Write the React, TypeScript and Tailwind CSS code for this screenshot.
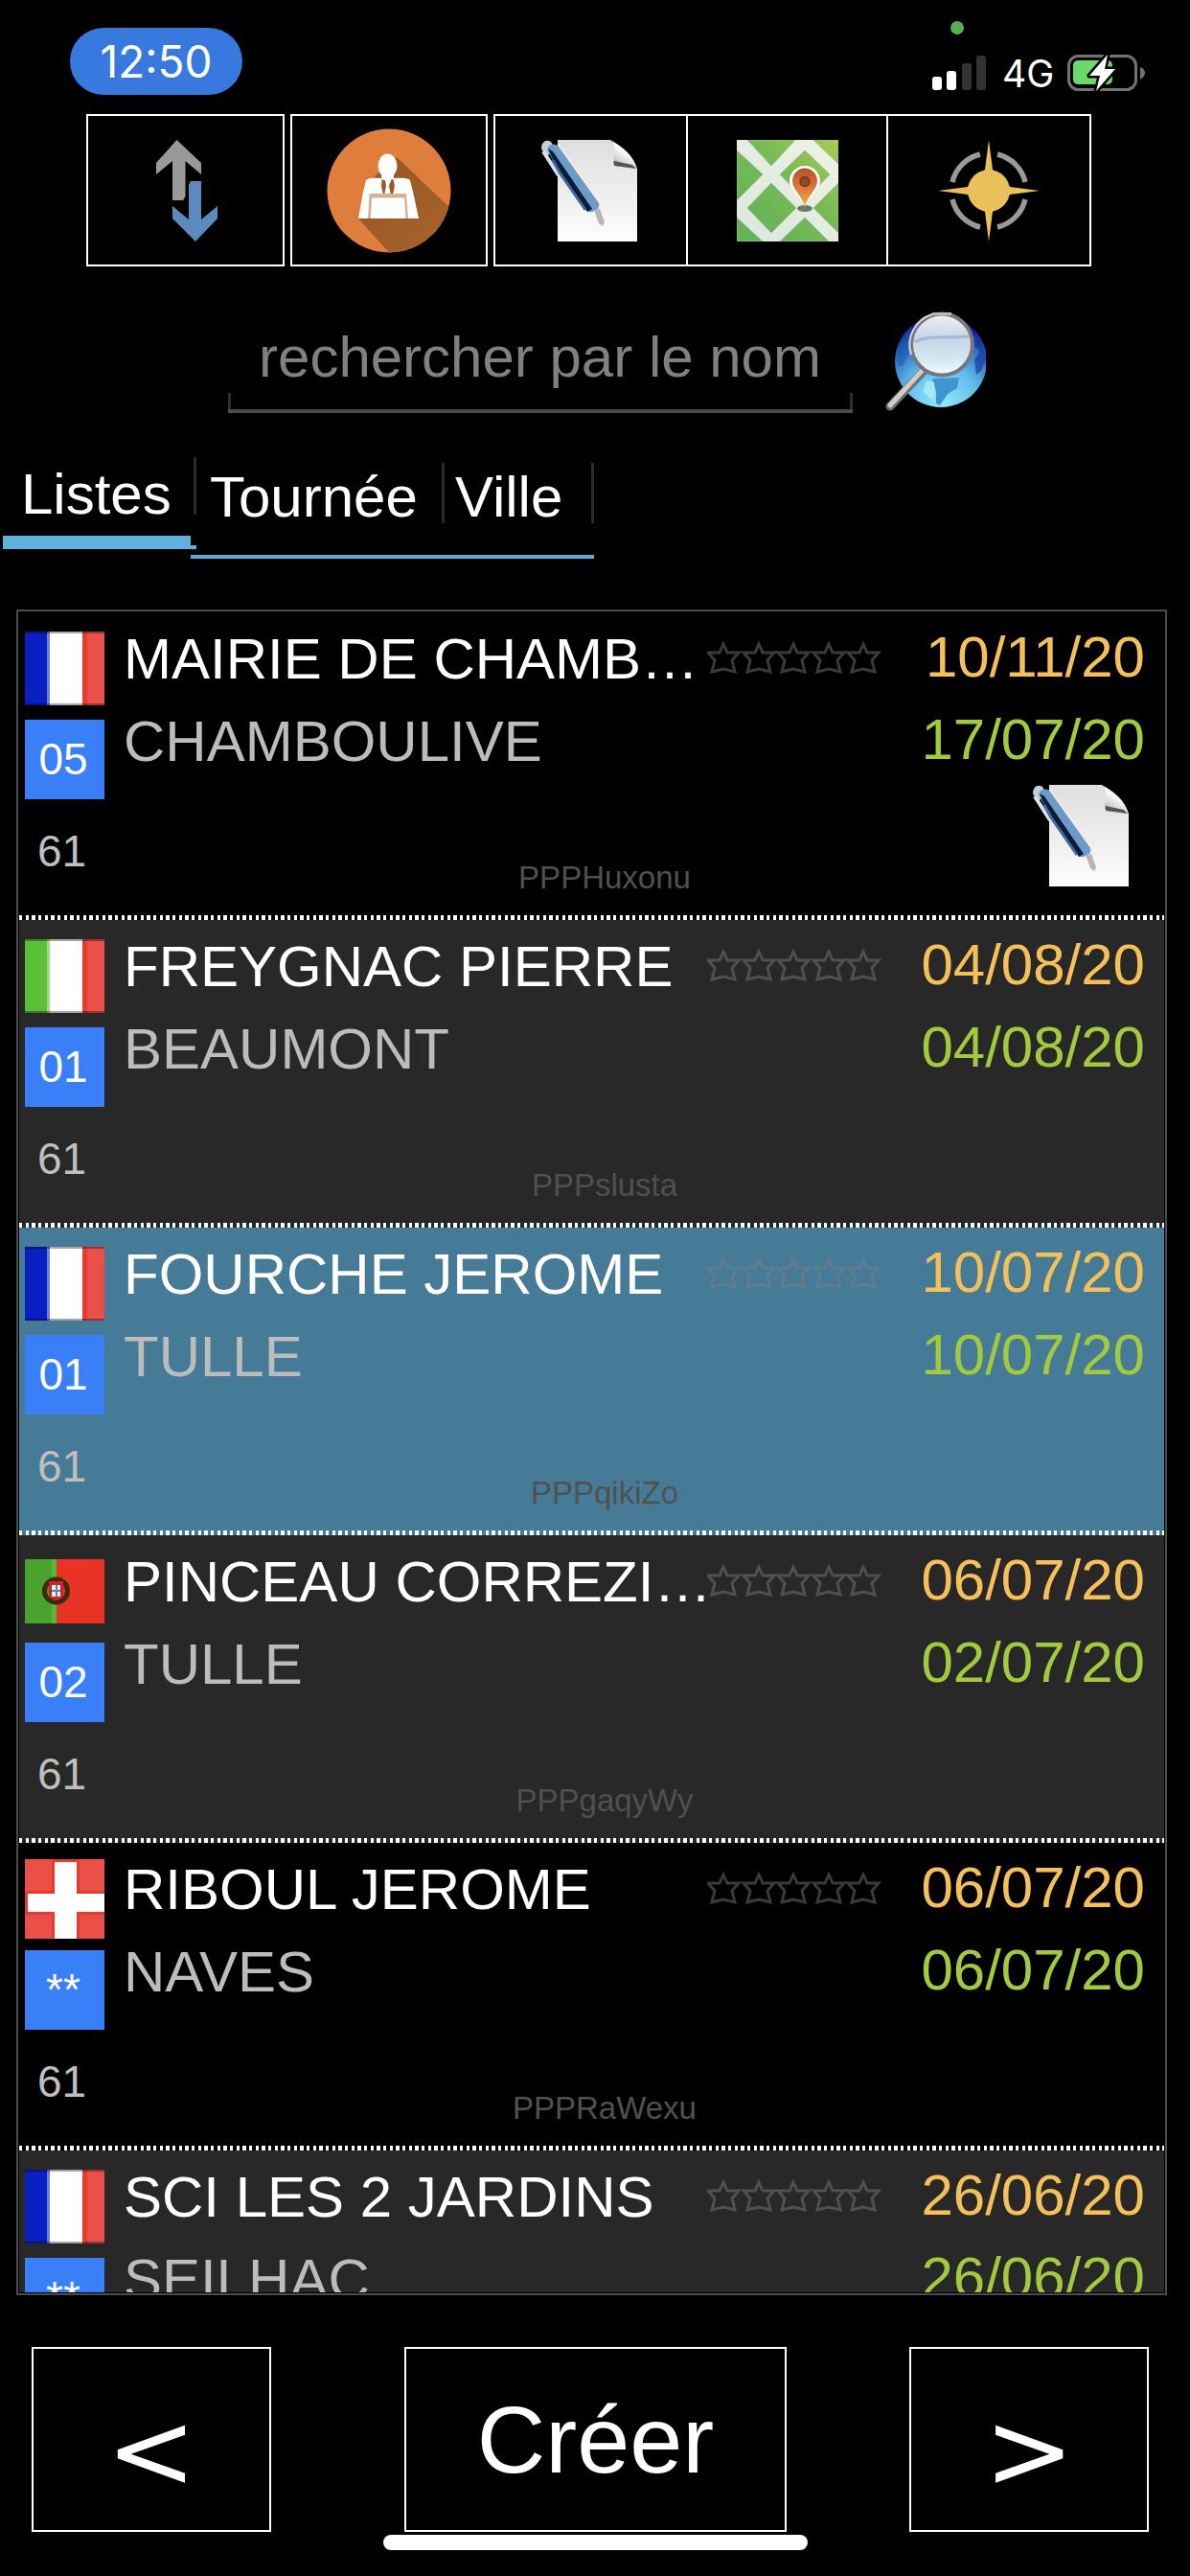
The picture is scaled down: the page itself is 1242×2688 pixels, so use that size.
import React from "react";

type Country = "fr" | "it" | "pt" | "ch";

interface Client {
  country: Country;
  code: string;
  name: string;
  city: string;
  planned: string;
  visited: string;
  reference: string;
  memo?: boolean;
  background: string;
}

const clients: Client[] = [
  { country: "fr", code: "05", name: "MAIRIE DE CHAMB…", city: "CHAMBOULIVE", planned: "10/11/20", visited: "17/07/20", reference: "PPPHuxonu", memo: true, background: "bg-black" },
  { country: "it", code: "01", name: "FREYGNAC PIERRE", city: "BEAUMONT", planned: "04/08/20", visited: "04/08/20", reference: "PPPslusta", background: "bg-[#282828]" },
  { country: "fr", code: "01", name: "FOURCHE JEROME", city: "TULLE", planned: "10/07/20", visited: "10/07/20", reference: "PPPqikiZo", background: "bg-[#467b97]" },
  { country: "pt", code: "02", name: "PINCEAU CORREZI…", city: "TULLE", planned: "06/07/20", visited: "02/07/20", reference: "PPPgaqyWy", background: "bg-[#282828]" },
  { country: "ch", code: "**", name: "RIBOUL JEROME", city: "NAVES", planned: "06/07/20", visited: "06/07/20", reference: "PPPRaWexu", background: "bg-black" },
  { country: "fr", code: "**", name: "SCI LES 2 JARDINS", city: "SEILHAC", planned: "26/06/20", visited: "26/06/20", reference: "", background: "bg-[#282828]" },
];

function SortIcon() {
  return (
    <svg viewBox="0 0 106 106" className="size-[106px]" aria-hidden="true">
      <path fill="#999" d="M43.500 0 69 24V36L52.500 22V59L50 63H39V22L22 36V24Z" />
      <path fill="#5b8abd" d="M58 43H69V83L86 69V82L63 106 39 82V69L56 83V47Z" />
    </svg>
  );
}

function AgentIcon() {
  return (
    <svg viewBox="0 0 130 130" className="size-[130px]" aria-hidden="true">
      <defs>
        <clipPath id="agent-disc"><circle cx="65" cy="65" r="64.500" /></clipPath>
        <linearGradient id="agent-shade" x1="0" y1="0" x2="1" y2="1">
          <stop offset="0.300" stopColor="#9b5a25" />
          <stop offset="1" stopColor="#a9652d" />
        </linearGradient>
      </defs>
      <circle cx="65" cy="65" r="64.500" fill="#df7d3c" />
      <path d="M73 30 135 89V135H70L33 94 50 50Z" fill="url(#agent-shade)" clipPath="url(#agent-disc)" />
      <ellipse cx="63.500" cy="39" rx="10" ry="12.500" fill="#fff" />
      <path d="M57 46H70V52C76 52 83 51 87 54L90 66 96 94H33L38 66 41 54C45 51 52 52 57 52Z" fill="#fff" />
      <path d="M57.500 53 63 55 69.500 53 71 60 69 69H59L57 60Z" fill="#9b5a25" />
      <path d="M61 54H67L65 60 67 70H60L62 60Z" fill="#fff" />
      <path d="M43 94 44.500 68H83L85 94" fill="#d6b295" />
      <path d="M46 94 47 72.500H81L82.500 94Z" fill="#fff" />
    </svg>
  );
}

function MemoIcon({ id }: { id: string }) {
  return (
    <svg viewBox="0 0 106 106" className="size-[106px]" aria-hidden="true">
      <defs>
        <linearGradient id={`${id}-page`} x1="0" y1="0" x2="0" y2="1">
          <stop offset="0" stopColor="#dedede" />
          <stop offset="1" stopColor="#fdfdfd" />
        </linearGradient>
        <linearGradient id={`${id}-fold`} x1="0.200" y1="1" x2="0.800" y2="0">
          <stop offset="0" stopColor="#555" />
          <stop offset="0.250" stopColor="#d0d0d0" />
          <stop offset="0.600" stopColor="#fff" />
          <stop offset="1" stopColor="#999" />
        </linearGradient>
      </defs>
      <path d="M18 0H73L101 30V106H18Z" fill={`url(#${id}-page)`} />
      <path d="M73 0C80 6 77 14 76 25 84 26 94 24 101 30 97 16 86 7 73 0Z" fill={`url(#${id}-fold)`} />
      <path d="M77 22 96 26 100 30 77 27Z" fill="#555" />
      <path d="M17 6 66 74" stroke="#f8efe6" strokeWidth="5" />
      <path d="M1 9C1 2 6-1 11 2L15 9 6 18Z" fill="#c9cdd0" />
      <path d="M3 12 19 37" stroke="#d9e2ea" strokeWidth="4" />
      <path d="M7 10C9 4 15 3 19 7L61 66C63 71 57 76 50 75L19 33Z" fill="#6d9bc8" />
      <path d="M8 9 13 12 54 72 49 75 18 32Z" fill="#0b1c3a" />
      <path d="M13 21 20 34 47 73" stroke="#3f6c9c" strokeWidth="3" fill="none" />
      <path d="M56 73 62 72 67 86 65 90 61 87Z" fill="#b5b5b5" />
    </svg>
  );
}

function MapIcon() {
  return (
    <svg viewBox="0 0 106 106" className="size-[106px]" aria-hidden="true">
      <defs>
        <linearGradient id="map-land" gradientUnits="userSpaceOnUse" x1="20" y1="90" x2="106" y2="0">
          <stop offset="0" stopColor="#66b356" />
          <stop offset="0.500" stopColor="#78ba56" />
          <stop offset="1" stopColor="#a9cc52" />
        </linearGradient>
        <linearGradient id="map-road" x1="0" y1="1" x2="1" y2="0">
          <stop offset="0" stopColor="#d9e7dd" />
          <stop offset="1" stopColor="#eef3e2" />
        </linearGradient>
        <linearGradient id="map-pin" x1="0" y1="0" x2="0" y2="1">
          <stop offset="0" stopColor="#b5522c" />
          <stop offset="0.400" stopColor="#dc6a39" />
          <stop offset="1" stopColor="#f0b03f" />
        </linearGradient>
      </defs>
      <path d="M0 0H106V106H0Z" fill="url(#map-road)" />
      <path
        fill="url(#map-land)"
        stroke="#9fb99a"
        strokeWidth="1"
        d="M11 0H61L36 27ZM80 0H106V25ZM0 11 27 36 0 63ZM71 11 97 36 71 63 45 36ZM36 45 62 71 36 97 11 71ZM106 45V97L80 71ZM0 81 27 106H0ZM71 81 96 106H45Z"
      />
      <ellipse cx="71" cy="71.500" rx="8" ry="3.500" fill="#6d7a6b" />
      <path d="M71 70C68 59 55 53 55 43A16 16 0 0 1 87 43C87 53 74 59 71 70Z" fill="#fff" />
      <path d="M71 70C69 59 58 52 58 43A13 13.500 0 0 1 84 43C84 52 73 59 71 70Z" fill="url(#map-pin)" />
      <circle cx="71" cy="43.500" r="5" fill="#8e4a2b" stroke="#6f3a22" strokeWidth="1.500" />
    </svg>
  );
}

function CompassIcon() {
  return (
    <svg viewBox="0 0 106 106" className="size-[106px]" aria-hidden="true">
      <path
        fill="none"
        stroke="#999"
        strokeWidth="5.500"
        d="M62 15A39 39 0 0 1 91 44M91 62A39 39 0 0 1 62 91M44 91A39 39 0 0 1 15 62M15 44A39 39 0 0 1 44 15"
      />
      <circle cx="53" cy="53" r="22" fill="#eac05b" />
      <path fill="#eac05b" d="M53 0 57 31 75 49 106 53 75 57 57 75 53 106 49 75 31 57 0 53 31 49 49 31Z" />
    </svg>
  );
}

function GlobeSearchIcon() {
  return (
    <svg viewBox="0 0 106 106" className="size-[106px]" aria-hidden="true">
      <defs>
        <radialGradient id="globe-sea" cx="0.500" cy="0.950" r="0.900">
          <stop offset="0" stopColor="#95eafc" />
          <stop offset="0.450" stopColor="#62bdea" />
          <stop offset="0.780" stopColor="#2a68bc" />
          <stop offset="1" stopColor="#04108c" />
        </radialGradient>
        <linearGradient id="globe-lens" x1="0" y1="0" x2="0" y2="1">
          <stop offset="0" stopColor="#f0f0f2" />
          <stop offset="0.400" stopColor="#c8d5e8" />
          <stop offset="0.700" stopColor="#cfe6ee" />
          <stop offset="1" stopColor="#f2fcff" />
        </linearGradient>
      </defs>
      <circle cx="59" cy="52" r="48" fill="url(#globe-sea)" />
      <path d="M90 22C100 28 106 40 106 50L101 62 96 66 94 50 100 42 92 34Z" fill="#12309f" opacity="0.600" />
      <path d="M13 42 22 22 29 16 27 40 20 56 14 58Z" fill="#1b55ad" opacity="0.500" />
      <path d="M50 70 78 69 76 80 66 86 58 98 54 96 54 84Z" fill="#3f94d2" />
      <path d="M44 72 52 74 53 84 50 92 40 84Z" fill="#b5f0fa" opacity="0.700" />
      <path d="M41 62 6 99" stroke="#6f6f6f" strokeWidth="9" strokeLinecap="round" />
      <path d="M40 61 6 98" stroke="#d0ccc8" strokeWidth="5" strokeLinecap="round" />
      <circle cx="60" cy="34.500" r="32" fill="url(#globe-lens)" stroke="#77777b" strokeWidth="4" />
      <path d="M32 32C45 24 70 28 88 26" stroke="#a5b8d4" strokeWidth="3" fill="none" />
      <path d="M28 45A33 33 0 0 1 50 3" stroke="#d8d8d8" strokeWidth="2" fill="none" />
      <path d="M50 1H70V4H50Z" fill="#b9b9b9" />
    </svg>
  );
}

function Flag({ country }: { country: Country }) {
  if (country === "pt") {
    return (
      <svg viewBox="0 0 83 67" className="h-[67px] w-[83px]" role="img" aria-label="Portugal">
        <path d="M0 0H33V67H0Z" fill="#4aa22f" />
        <path d="M28 0H33V67H28Z" fill="#56b838" />
        <path d="M33 0H83V67H33Z" fill="#e93425" />
        <circle cx="32.500" cy="33" r="12" fill="none" stroke="#3d2a0c" strokeWidth="5" />
        <path d="M25 23H40V36C40 45 25 45 25 36Z" fill="#d3202f" />
        <path d="M28 27H37V39H28Z" fill="#e8f2f5" />
        <path d="M32 27H34V39H32ZM28 32H37V34H28Z" fill="#5a8a9a" />
      </svg>
    );
  }
  if (country === "ch") {
    return (
      <svg viewBox="0 0 83 83" className="size-[83px]" role="img" aria-label="Suisse">
        <path d="M0 0H83V83H0Z" fill="#eb5048" />
        <path d="M28 0H57V83H28ZM0 33H83V58H0Z" fill="#ea3a2f" />
        <path d="M31 3H54V36H83V55H54V83H31V55H3V36H31Z" fill="#fff" />
      </svg>
    );
  }
  const french = country === "fr";
  return (
    <svg viewBox="0 0 83 77" className="h-[77px] w-[83px]" role="img" aria-label={french ? "France" : "Italie"}>
      <path d="M0 0H25V77H0Z" fill={french ? "#0a1fc0" : "#5cbf38"} />
      <path d="M25 0H60V77H25Z" fill="#fff" />
      <path d="M23 0H26V77H23Z" fill={french ? "#6f7be0" : "#9bdc85"} />
      <path d="M60 0H83V77H60Z" fill="#eb5048" />
      <path d="M60 0H65V77H60Z" fill="#ea3a2f" />
      <path d="M0 0H83V2H0ZM0 75H83V77H0Z" fill="#000" opacity="0.350" />
    </svg>
  );
}

function Stars() {
  return (
    <svg viewBox="0 0 183 34" className="h-[34px] w-[183px]" role="img" aria-label="0 étoile sur 5">
      <g fill="none" stroke="#808080" strokeOpacity="0.450" strokeWidth="3">
        {[0, 37, 73, 110, 146].map((x) => (
          <path key={x} transform={`translate(${x} 0)`} d="M17 3 21 12H33L26 20 29 32 17 29 5 32 8 20 1 12H13Z" />
        ))}
      </g>
    </svg>
  );
}

function StatusBar() {
  return (
    <div className="relative flex h-[119px] items-start justify-between pr-[46px] pl-[73px]">
      <div className="mt-[29px] flex h-[70px] w-[180px] items-center justify-center rounded-full bg-[#3879df] font-[Inter] text-[46px] leading-none text-white">
        12:50
      </div>
      <span className="absolute top-[22px] right-[236px] size-[14px] rounded-full bg-[#57ac55]" />
      <div className="mt-[57px] flex h-[38px] items-center">
        <svg viewBox="0 0 57 38" className="mr-[16px] h-[38px] w-[57px]" role="img" aria-label="Réseau">
          <rect x="0" y="23" width="10" height="14" rx="3" fill="#fff" />
          <rect x="15" y="17" width="10" height="20" rx="3" fill="#fff" />
          <rect x="31" y="9" width="10" height="28" rx="3" fill="#333" />
          <rect x="46" y="1" width="10" height="36" rx="3" fill="#333" />
        </svg>
        <span className="w-[68px] font-[Inter] text-[39px] leading-none">4G</span>
        <svg viewBox="0 0 82 40" className="h-[40px] w-[82px]" role="img" aria-label="Batterie en charge">
          <rect x="1.500" y="2.500" width="70" height="35" rx="10" fill="none" stroke="#737373" strokeWidth="3" />
          <path d="M76 14Q81 16 81 20T76 27Z" fill="#737373" />
          <rect x="6" y="7" width="41" height="25" rx="5" fill="#6ad969" />
          <path d="M42 1 23 23H34L30 39 50 16H39Z" fill="#fff" stroke="#000" strokeWidth="5" strokeLinejoin="round" paintOrder="stroke" />
        </svg>
      </div>
    </div>
  );
}

function Toolbar() {
  const button = "flex h-[159px] items-center justify-center border-2 border-white";
  return (
    <nav className="flex pr-[103px] pl-[90px]" aria-label="Outils">
      <button type="button" aria-label="Trier" className={`${button} mr-[6px] flex-[203]`}><SortIcon /></button>
      <button type="button" aria-label="Clients" className={`${button} mr-[6px] flex-[202]`}><AgentIcon /></button>
      <button type="button" aria-label="Mémo" className={`${button} flex-[199]`}><MemoIcon id="tool" /></button>
      <button type="button" aria-label="Carte" className={`${button} flex-[207] border-l-0`}><MapIcon /></button>
      <button type="button" aria-label="Position" className={`${button} flex-[210] border-l-0`}><CompassIcon /></button>
    </nav>
  );
}

function SearchBar() {
  return (
    <form className="mt-[46px] flex justify-center gap-[33px] pl-[24px]" onSubmit={(e) => e.preventDefault()}>
      <div className="relative h-[107px] w-[652px] border-b-4 border-[#4a4a4a]">
        <input
          type="text"
          aria-label="rechercher par le nom"
          placeholder="rechercher par le nom"
          className="h-[97px] w-full bg-transparent text-center text-[60px] text-white outline-none placeholder:text-[#808080]"
        />
        <span className="absolute bottom-0 left-0 h-[17px] w-[3px] bg-[#2e2e2e]" />
        <span className="absolute right-0 bottom-0 h-[17px] w-[3px] bg-[#2e2e2e]" />
      </div>
      <button type="submit" aria-label="Rechercher"><GlobeSearchIcon /></button>
    </form>
  );
}

function Tabs() {
  return (
    <div className="mt-[46px] flex items-start pl-[3px]" role="tablist">
      <button type="button" role="tab" aria-selected="true" className="w-[202px]">
        <span className="flex justify-between pl-[19px]">
          <span className="leading-[78px]">Listes</span>
          <span className="h-[60px] w-[3px] bg-[#2b2b2b]" />
        </span>
        <span className="mt-[4px] block h-[10px] w-[196px] bg-[#5eb0df]" />
        <span className="block h-[4px] bg-[#5eb0df]" />
      </button>
      <button type="button" role="tab" aria-selected="false" className="mt-[6px] -ml-[6px] h-[100px] w-[265px] border-b-4 border-[#5aaad8]">
        <span className="flex h-[96px] justify-between pl-[20px]">
          <span className="leading-[72px]">Tournée</span>
          <span className="h-[63px] w-[3px] bg-[#2b2b2b]" />
        </span>
      </button>
      <button type="button" role="tab" aria-selected="false" className="mt-[6px] h-[100px] w-[156px] border-b-4 border-[#5aaad8]">
        <span className="flex h-[96px] justify-between pl-[11px]">
          <span className="leading-[72px]">Ville</span>
          <span className="h-[63px] w-[3px] bg-[#2b2b2b]" />
        </span>
      </button>
    </div>
  );
}

function ClientRow({ client, index }: { client: Client; index: number }) {
  return (
    <li className={`${client.background} shrink-0`}>
      <div className="flex h-[316px] pl-[6px]">
        <div className="w-[83px] text-center text-[46px]">
          <div className="mt-[17px] flex h-[83px] items-center"><Flag country={client.country} /></div>
          <div className="mt-[12px] h-[83px] bg-[#397ff8] pr-[3px] leading-[82px] text-white">{client.code}</div>
          <div className="mt-[24px] pr-[6px] leading-[60px] text-[#bfbfbf]">61</div>
        </div>
        <div className="ml-[20px] grid flex-1 grid-cols-[1fr_auto] pr-[20px] leading-[86px]">
          <div className="col-start-1 row-start-1">
            <div className="flex pt-[6px]">
              <div className="w-[609px] whitespace-nowrap text-white">{client.name}</div>
              <div className="pt-[24px] leading-none"><Stars /></div>
            </div>
            <div className="text-[#bcbcbc]">{client.city}</div>
          </div>
          <div className="col-start-2 row-start-1 flex flex-col items-end pt-[4px]">
            <time className="text-[#f5c05a]">{client.planned}</time>
            <time className="text-[#a3ca3f]">{client.visited}</time>
            {client.memo && (
              <button type="button" aria-label="Ouvrir le mémo" className="mt-[4px] mr-[12px]"><MemoIcon id={`row-${index}`} /></button>
            )}
          </div>
          <div className="pointer-events-none col-span-2 col-start-1 row-start-1 mr-[62px] mb-[19px] self-end text-center text-[33px] leading-[40px] text-[#505050]">
            {client.reference}
          </div>
        </div>
      </div>
      <div className="h-[5px] bg-[linear-gradient(90deg,#fff_0_3px,transparent_3px_7px,#fff_7px_10px,transparent_10px_13px,#fff_13px_17px,transparent_17px_20px)] bg-[length:20px_5px]" />
    </li>
  );
}

export default function App() {
  const arrow = "h-[193px] flex-[249] border-2 border-white pt-[22px] font-['DejaVu_Sans',sans-serif] text-[112px]";
  return (
    <div className="flex h-screen flex-col overflow-hidden bg-black font-['Liberation_Sans',Arial,sans-serif] text-[60px] leading-none text-white">
      <StatusBar />
      <Toolbar />
      <SearchBar />
      <Tabs />
      <main className="mt-[53px] mr-[24px] ml-[17px] min-h-0 flex-1 border-2 border-[#4c4c4c] p-px">
        <ul className="flex h-full flex-col overflow-hidden">
          {clients.map((client, index) => (
            <ClientRow key={client.name} client={client} index={index} />
          ))}
        </ul>
      </main>
      <footer className="mt-[54px] pb-[27px]">
        <div className="flex pr-[43px] pl-[33px]">
          <button type="button" aria-label="Précédent" className={`${arrow} mr-[139px]`}>&lt;</button>
          <button type="button" className="mr-[128px] h-[193px] flex-[401] border-2 border-white text-[99px]">Créer</button>
          <button type="button" aria-label="Suivant" className={arrow}>&gt;</button>
        </div>
        <div className="mx-auto mt-[3px] h-[16px] w-[443px] rounded-full bg-white" />
      </footer>
    </div>
  );
}
